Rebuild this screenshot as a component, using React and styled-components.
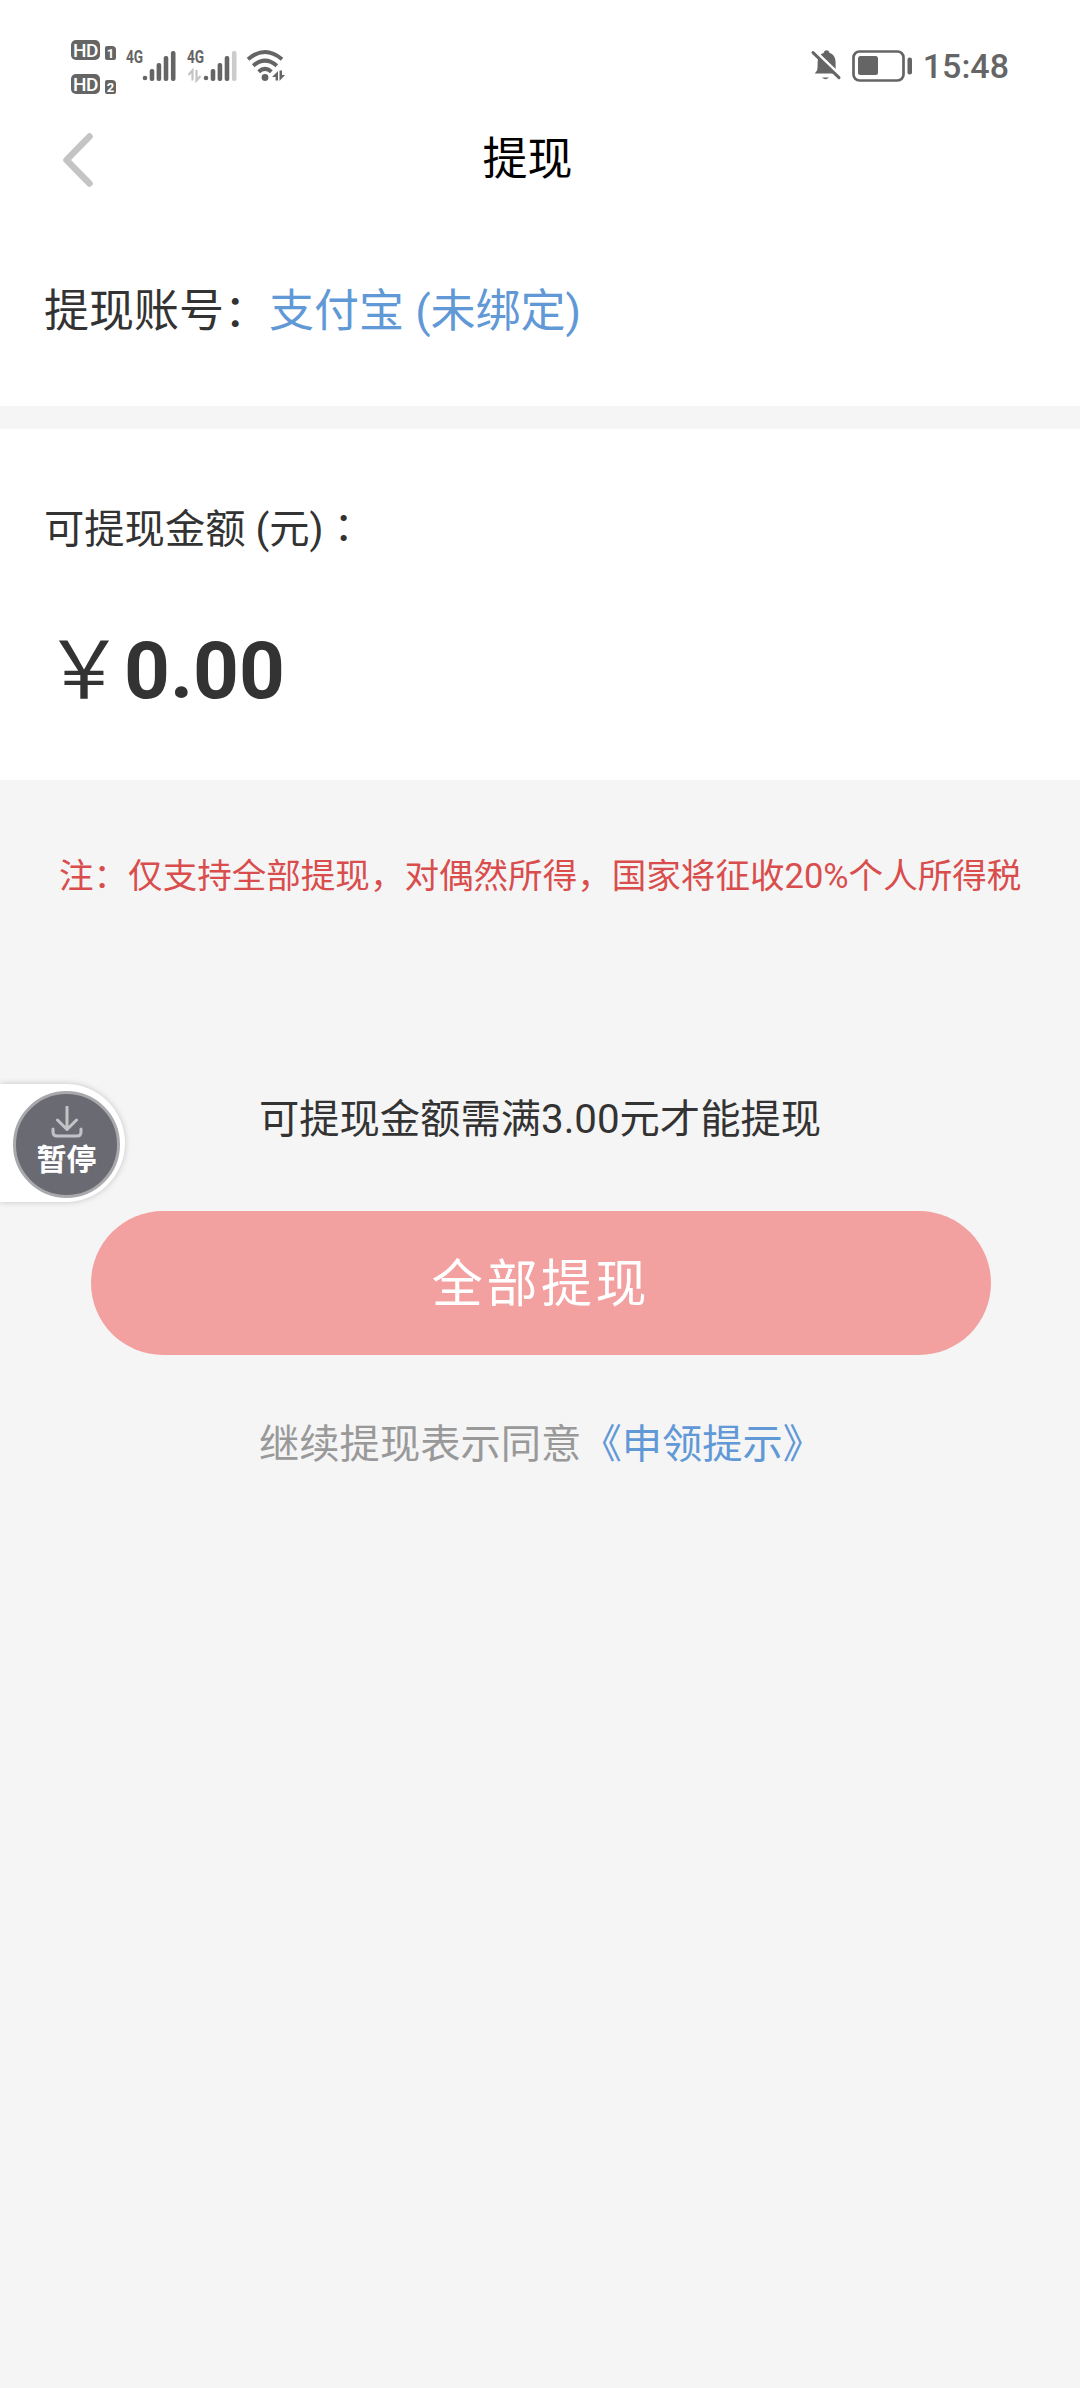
import React from "react";
import styled, { createGlobalStyle } from "styled-components";

const GlobalStyle = createGlobalStyle`
  * { box-sizing: border-box; }
  body {
    margin: 0;
    background: #f5f5f5;
    color: #333;
    font-family: Roboto, "Noto Sans CJK SC", sans-serif;
  }
`;

const ink = "#656565";

const Page = styled.div`
  position: relative;
  display: flex;
  flex-direction: column;
  width: 1080px;
  min-height: 2388px;
  overflow: hidden;
  background: #f5f5f5;
`;

const StatusBar = styled.header`
  display: flex;
  justify-content: space-between;
  height: 108px;
  padding: 0 71px;
  background: #fff;
`;

const StatusGroup = styled.div`
  display: flex;
  align-items: flex-start;
  padding-top: ${(p) => p.$top}px;
`;

const HdStack = styled.div`
  display: flex;
  flex-direction: column;
  gap: 14px;
  width: 45px;
  margin-right: 10px;
`;

const HdRow = styled.div`
  display: flex;
  align-items: flex-end;
  gap: 5px;
  height: 20px;
`;

const HdLabel = styled.span`
  width: 29px;
  height: 20px;
  border-radius: 5px;
  background: ${ink};
  color: #fff;
  font-size: 19px;
  font-weight: 500;
  line-height: 21px;
  text-align: center;
  letter-spacing: -0.5px;
`;

const SimNumber = styled.span`
  width: 11px;
  height: 14px;
  border-radius: 2px 4px 2px 2px;
  background: ${ink};
  color: #fff;
  font-size: 13px;
  font-weight: 700;
  line-height: 15px;
  text-align: center;
`;

const Glyph = styled.svg`
  display: block;
  flex: none;
  overflow: visible;
  margin-left: ${(p) => p.$left || 0}px;
  margin-top: ${(p) => p.$drop || 0}px;
`;

const SignalBox = styled.div`
  display: flex;
  width: 51px;
  margin-left: ${(p) => p.$left || 0}px;
`;

const Network = styled.span`
  width: 17px;
  margin-top: 6px;
  color: ${ink};
  font-size: 17.5px;
  font-weight: 700;
  line-height: 22px;
  transform: scaleX(0.78);
  transform-origin: left;
`;

const Clock = styled.time`
  margin-left: 9px;
  margin-top: -1px;
  color: ${ink};
  font-size: 34px;
  font-weight: 500;
  line-height: 34px;
`;

const TitleBar = styled.nav`
  display: grid;
  grid-template-columns: 120px 1fr 145px;
  align-items: center;
  height: 102px;
  padding-top: 2px;
  background: #fff;
`;

const BackButton = styled.button`
  display: flex;
  padding: 0 0 0 61px;
  border: 0;
  background: none;
`;

const Title = styled.h1`
  margin: 0;
  color: #000;
  font-size: 45px;
  font-weight: 400;
  line-height: 60px;
  text-align: center;
`;

const AccountRow = styled.section`
  display: flex;
  height: 196px;
  padding: 72px 44px 0;
  background: #fff;
  font-size: 45px;
  line-height: 60px;
  white-space: pre;
`;

const Link = styled.a`
  color: #6198d6;
`;

const BalancePanel = styled.section`
  height: 351px;
  margin-top: 23px;
  padding: 67px 44px 0;
  background: #fff;
`;

const BalanceLabel = styled.div`
  font-size: 40.3px;
  line-height: 60px;
  white-space: pre;
`;

const CenteredColon = styled.span`
  font-family: "Noto Sans CJK JP", sans-serif;
`;

const Balance = styled.div`
  display: flex;
  align-items: baseline;
  margin-top: 53px;
  font-size: 80px;
  font-weight: 700;
  line-height: 100px;
`;

const Currency = styled.span`
  width: 80px;
  font-family: "Noto Sans CJK SC", sans-serif;
  font-weight: 400;
`;

const TaxNote = styled.p`
  margin: 66px 0 0 59px;
  color: #d94d4d;
  font-size: 34.56px;
  line-height: 60px;
  white-space: nowrap;
`;

const Minimum = styled.p`
  margin: 184px 0 0;
  font-size: 40.3px;
  line-height: 60px;
  text-align: center;
`;

const WithdrawButton = styled.button`
  width: 900px;
  height: 144px;
  margin: 61px 0 0 91px;
  padding: 0 0 7px;
  border: 0;
  border-radius: 72px;
  background: #f2a0a0;
  color: #fff;
  font-family: inherit;
  font-size: 51px;
  letter-spacing: 3.6px;
`;

const Agreement = styled.p`
  margin: 60px 0 0 259px;
  color: #999;
  font-size: 40.3px;
  line-height: 60px;
  white-space: nowrap;
`;

const FloatingTab = styled.aside`
  position: absolute;
  left: 0;
  top: 1084px;
  display: flex;
  width: 125px;
  height: 118px;
  padding: 7px 0 0 13px;
  border-radius: 0 59px 59px 0;
  background: #fff;
  box-shadow: 0 0 6px rgba(0, 0, 0, 0.2);
`;

const PauseDisc = styled.button`
  display: flex;
  flex-direction: column;
  align-items: center;
  gap: 4px;
  width: 107px;
  height: 107px;
  padding: 12px 0 0;
  border: 3px solid #a9a9ad;
  border-radius: 50%;
  background: #6a6a73;
  color: #fff;
  font-family: inherit;
  font-size: 30px;
  font-weight: 700;
  line-height: 36px;
`;

const Signal = ({ weak, left }) => (
  <SignalBox $left={left}>
    <Network>4G</Network>
    <Glyph $drop={10} width="34" height="32" viewBox="17 0 34 32">
      {weak && <path d="M1.500 25l4-4.500v10M9.500 20v10.500l4-4.500" fill="none" stroke="#c4c4c4" strokeWidth="2.200" />}
      <g fill={ink}>
        <circle cx="19" cy="28" r="2.300" />
        <rect x="23.700" y="19" width="4.600" height="12" rx="2" />
        <rect x="30.600" y="13" width="4.600" height="18" rx="2" />
        <rect x="37.700" y="6" width="4.600" height="25" rx="2" />
        <rect x="44.900" y="1" width="4.600" height="30" rx="2" fill={weak ? "#ccc" : ink} />
      </g>
    </Glyph>
  </SignalBox>
);

const Wifi = () => (
  <Glyph $left={8} $drop={10} width="40" height="32" viewBox="0 0 40 32">
    <g fill="none" stroke={ink} strokeWidth="4" strokeLinecap="butt">
      <path d="M2 9.200Q19 -5.200 36 9.200" />
      <path d="M7.200 15.700Q19 5.600 30.800 15.700" />
      <path d="M12.600 21.700Q19 16 25.400 21.700" />
    </g>
    <circle cx="19" cy="27.500" r="3.400" fill={ink} />
    <path d="M26 27l6-6v9.500h-2.400V27zM33.500 20.500v10.500l5.500-6h-3v-4.500z" fill={ink} />
  </Glyph>
);

const BellOff = () => (
  <Glyph $drop={-1} width="30" height="32" viewBox="0 0 30 32">
    <path
      d="M3 25.200c3-2.800 3-4.200 3-10 0-6 2.500-9.200 6-10.300C12.600 1 17.400 1 18 4.900c4 1.100 6 4.500 6 10.300v10z"
      fill={ink}
      transform="translate(.6 -.8)"
    />
    <path d="M0 5l27 26" stroke="#fff" strokeWidth="3.500" transform="translate(2.500 -4)" />
    <path d="M2 3.600l26 25" stroke={ink} strokeWidth="3" strokeLinecap="round" />
    <path d="M11 28.500h7q-3.500 3.500-7 0z" fill={ink} />
  </Glyph>
);

const Battery = () => (
  <Glyph $left={11} width="62" height="32" viewBox="0 0 62 32">
    <rect x="1.500" y="1.500" width="50" height="29" rx="6" fill="none" stroke={ink} strokeWidth="2.700" />
    <rect x="6" y="6" width="20" height="19" rx="2.500" fill={ink} />
    <rect x="55.500" y="7.500" width="4.500" height="17" rx="2" fill={ink} />
  </Glyph>
);

export default function App() {
  return (
    <Page>
      <GlobalStyle />
      <StatusBar>
        <StatusGroup $top={40}>
          <HdStack>
            {[1, 2].map((n) => (
              <HdRow key={n}>
                <HdLabel>HD</HdLabel>
                <SimNumber>{n}</SimNumber>
              </HdRow>
            ))}
          </HdStack>
          <Signal />
          <Signal weak left={10} />
          <Wifi />
        </StatusGroup>
        <StatusGroup $top={50}>
          <BellOff />
          <Battery />
          <Clock>15:48</Clock>
        </StatusGroup>
      </StatusBar>

      <TitleBar>
        <BackButton aria-label="返回">
          <svg width="34" height="54" viewBox="0 0 34 54">
            <path d="M28.500 3.500L5.500 27l23 23.500" fill="none" stroke="#c4c4c4" strokeWidth="6.500" strokeLinecap="round" strokeLinejoin="round" />
          </svg>
        </BackButton>
        <Title>提现</Title>
      </TitleBar>

      <AccountRow>
        提现账号：<Link>支付宝 (未绑定)</Link>
      </AccountRow>

      <BalancePanel>
        <BalanceLabel>
          可提现金额 (元)<CenteredColon>：</CenteredColon>
        </BalanceLabel>
        <Balance>
          <Currency>￥</Currency>0.00
        </Balance>
      </BalancePanel>

      <TaxNote>注：仅支持全部提现，对偶然所得，国家将征收20%个人所得税</TaxNote>
      <Minimum>可提现金额需满3.00元才能提现</Minimum>
      <WithdrawButton>全部提现</WithdrawButton>
      <Agreement>
        继续提现表示同意<Link>《申领提示》</Link>
      </Agreement>

      <FloatingTab>
        <PauseDisc>
          <svg width="32" height="32" viewBox="0 0 32 32">
            <path d="M16 1v22M6.500 14l9.500 9.500 9.500-9.500M2 23v3q0 4 4 4h20q4 0 4-4v-3" fill="none" stroke="#c3c3c7" strokeWidth="3" strokeLinecap="round" strokeLinejoin="round" />
          </svg>
          暂停
        </PauseDisc>
      </FloatingTab>
    </Page>
  );
}
